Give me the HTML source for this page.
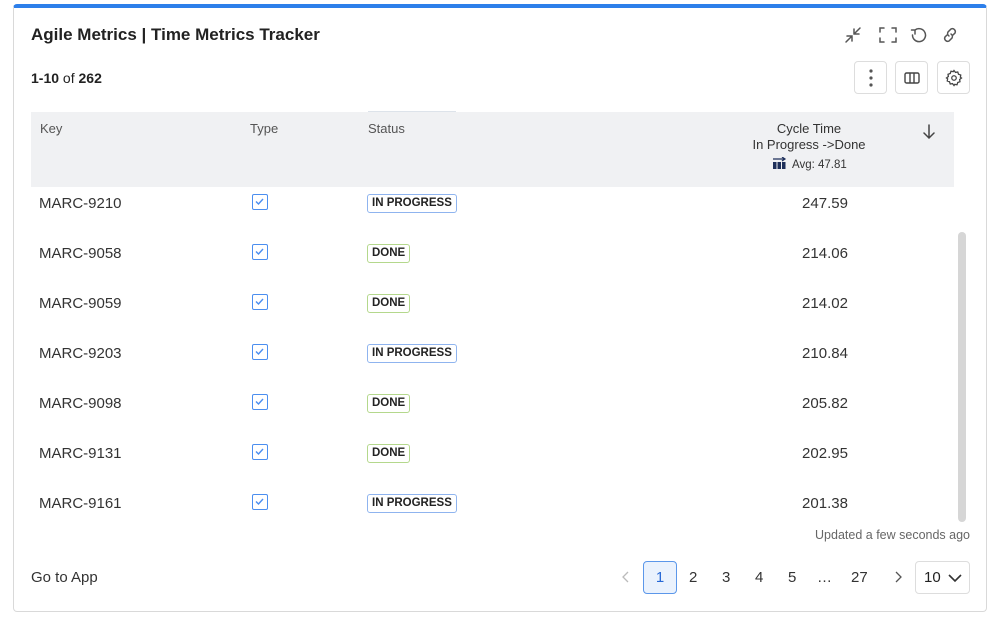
<!DOCTYPE html>
<html><head><style>
*{box-sizing:border-box;margin:0;padding:0}
body{width:999px;height:618px;background:#fff;font-family:"Liberation Sans",sans-serif;color:#222;position:relative;overflow:hidden}
.card{position:absolute;left:13px;top:4px;width:974px;height:608px;border:1px solid #d9d9d9;border-top:4px solid #2d7fea;border-radius:4px}
.abs{position:absolute}
.title{left:31px;top:25px;font-size:17px;font-weight:bold;color:#222}
.cnt{left:31px;top:70px;font-size:14px}
.ib{position:absolute;top:61px;width:33px;height:33px;border:1px solid #ddd;border-radius:4px;display:flex;align-items:center;justify-content:center}
.thead{left:31px;top:112px;width:923px;height:75px;background:#f0f1f3}
.th{position:absolute;top:121px;font-size:13px;color:#555}
.row{position:absolute;left:31px;width:923px;height:50px}
.key{position:absolute;left:8px;top:1px;font-size:15px;color:#333;line-height:20px}
.cb{position:absolute;left:221px;top:1px;width:16px;height:16px;border:1.5px solid #4a8ef0;border-radius:2px}
.tag{position:absolute;left:336px;top:1px;height:19px;font-size:11.5px;font-weight:bold;padding:0 4px;line-height:17px;border-radius:3px;border:1px solid}
.ip{border-color:#8fb4ef;color:#222}
.dn{border-color:#b4d88c;color:#222}
.val{position:absolute;left:740px;width:108px;text-align:center;top:1px;font-size:15px;color:#333;line-height:20px}
.pg{position:absolute;top:569px;font-size:15px;color:#333}
</style></head><body>
<div class="card"></div>
<div class="abs title">Agile Metrics | Time Metrics Tracker</div>
<div class="abs cnt"><b>1-10</b> of <b>262</b></div>
<svg class="abs" style="left:843px;top:25px" width="130" height="20" fill="none" stroke="#555" stroke-width="1.5" stroke-linecap="round">
<path d="M3 17l6-6M4 11h5v5M17 3l-6 6M16 9h-5V4"/>
<path d="M37 7V3h4M49 3h4v4M53 13v4h-4M41 17h-4v-4"/>
<path d="M72 5a6.5 6.5 0 1 1-2.5 5M72 5v4M72 5h-3.5"/>
<path d="M104 10l-2 2a3 3 0 0 0 4 4l3-3a3 3 0 0 0-1-4M110 10l2-2a3 3 0 0 0-4-4l-3 3a3 3 0 0 0 1 4"/>
</svg>
<div class="ib" style="left:854px"><svg width="4" height="18"><circle cx="2" cy="2" r="1.6" fill="#555"/><circle cx="2" cy="9" r="1.6" fill="#555"/><circle cx="2" cy="16" r="1.6" fill="#555"/></svg></div>
<div class="ib" style="left:895px"><svg width="16" height="12" fill="none" stroke="#444" stroke-width="1.4"><rect x="1" y="1" width="14" height="10" rx="1.5"/><path d="M6 1v10M10 1v10"/></svg></div>
<div class="ib" style="left:937px"><svg width="18" height="18" viewBox="0 0 24 24" fill="none" stroke="#444" stroke-width="1.7"><circle cx="12" cy="12" r="3"/><path d="M12 2l2 2.5 3-.5 1 3 3 1-.5 3L22 12l-2.5 2 .5 3-3 1-1 3-3-.5L12 22l-2-2.5-3 .5-1-3-3-1 .5-3L2 12l2.5-2-.5-3 3-1 1-3 3 .5z"/></svg></div>
<div class="abs thead"></div>
<div class="abs" style="left:368px;top:111px;width:88px;height:1px;background:#dde3ea"></div>
<div class="th" style="left:40px">Key</div>
<div class="th" style="left:250px">Type</div>
<div class="th" style="left:368px">Status</div>
<div class="abs" style="left:700px;top:121px;width:218px;text-align:center;font-size:13px;color:#333;line-height:16px">Cycle Time<br>In Progress -&gt;Done</div>
<div class="abs" style="left:772px;top:157px;font-size:11.5px;color:#333"><svg width="15" height="13" style="vertical-align:-2px;margin-right:5px"><path d="M1 2h11M10 0l3 2-3 2" stroke="#1e2f5a" stroke-width="1.2" fill="none"/><rect x="1" y="5" width="3.5" height="7" fill="#1e2f5a"/><rect x="5.5" y="5" width="3.5" height="7" fill="#1e2f5a"/><rect x="10" y="5" width="3.5" height="7" fill="#1e2f5a"/></svg>Avg: 47.81</div>
<svg class="abs" style="left:922px;top:124px" width="14" height="16" fill="none" stroke="#444" stroke-width="1.5" stroke-linecap="round"><path d="M7 1v13M2 9l5 5 5-5"/></svg>
<div class="abs" style="left:958px;top:232px;width:8px;height:290px;background:#d6d6d6;border-radius:4px"></div>

<div class="row" style="top:193px"><div class="key">MARC-9210</div><div class="cb"><svg width="13" height="13" style="position:absolute;left:0;top:0"><path d="M3 6.5l2.5 2.5 4.5-5" stroke="#4a8ef0" stroke-width="1.4" fill="none"/></svg></div><div class="tag ip">IN PROGRESS</div><div class="val">247.59</div></div>
<div class="row" style="top:243px"><div class="key">MARC-9058</div><div class="cb"><svg width="13" height="13" style="position:absolute;left:0;top:0"><path d="M3 6.5l2.5 2.5 4.5-5" stroke="#4a8ef0" stroke-width="1.4" fill="none"/></svg></div><div class="tag dn">DONE</div><div class="val">214.06</div></div>
<div class="row" style="top:293px"><div class="key">MARC-9059</div><div class="cb"><svg width="13" height="13" style="position:absolute;left:0;top:0"><path d="M3 6.5l2.5 2.5 4.5-5" stroke="#4a8ef0" stroke-width="1.4" fill="none"/></svg></div><div class="tag dn">DONE</div><div class="val">214.02</div></div>
<div class="row" style="top:343px"><div class="key">MARC-9203</div><div class="cb"><svg width="13" height="13" style="position:absolute;left:0;top:0"><path d="M3 6.5l2.5 2.5 4.5-5" stroke="#4a8ef0" stroke-width="1.4" fill="none"/></svg></div><div class="tag ip">IN PROGRESS</div><div class="val">210.84</div></div>
<div class="row" style="top:393px"><div class="key">MARC-9098</div><div class="cb"><svg width="13" height="13" style="position:absolute;left:0;top:0"><path d="M3 6.5l2.5 2.5 4.5-5" stroke="#4a8ef0" stroke-width="1.4" fill="none"/></svg></div><div class="tag dn">DONE</div><div class="val">205.82</div></div>
<div class="row" style="top:443px"><div class="key">MARC-9131</div><div class="cb"><svg width="13" height="13" style="position:absolute;left:0;top:0"><path d="M3 6.5l2.5 2.5 4.5-5" stroke="#4a8ef0" stroke-width="1.4" fill="none"/></svg></div><div class="tag dn">DONE</div><div class="val">202.95</div></div>
<div class="row" style="top:493px"><div class="key">MARC-9161</div><div class="cb"><svg width="13" height="13" style="position:absolute;left:0;top:0"><path d="M3 6.5l2.5 2.5 4.5-5" stroke="#4a8ef0" stroke-width="1.4" fill="none"/></svg></div><div class="tag ip">IN PROGRESS</div><div class="val">201.38</div></div>

<div class="abs" style="right:29px;top:528px;font-size:12.5px;color:#666">Updated a few seconds ago</div>
<div class="abs" style="left:31px;top:569px;font-size:15px;color:#333">Go to App</div>
<svg class="abs" style="left:622px;top:571px" width="8" height="12" fill="none" stroke="#bbb" stroke-width="1.3"><path d="M6 1L1 6l5 5"/></svg>
<div class="abs" style="left:643px;top:561px;width:34px;height:33px;border:1px solid #5b97ea;border-radius:4px;background:#eaf2fd;color:#2668d6;font-size:15px;text-align:center;line-height:31px">1</div>
<div class="pg" style="left:689px">2</div>
<div class="pg" style="left:722px">3</div>
<div class="pg" style="left:755px">4</div>
<div class="pg" style="left:788px">5</div>
<div class="pg" style="left:817px">…</div>
<div class="pg" style="left:851px">27</div>
<svg class="abs" style="left:894px;top:571px" width="8" height="12" fill="none" stroke="#555" stroke-width="1.3"><path d="M2 1l5 5-5 5"/></svg>
<div class="abs" style="left:915px;top:561px;width:55px;height:33px;border:1px solid #ddd;border-radius:4px;font-size:15px;color:#222;padding-left:8px;line-height:31px">10<svg style="position:absolute;left:32px;top:12px" width="14" height="9" fill="none" stroke="#333" stroke-width="1.6"><path d="M1 1l6 6 6-6"/></svg></div>
</body></html>
